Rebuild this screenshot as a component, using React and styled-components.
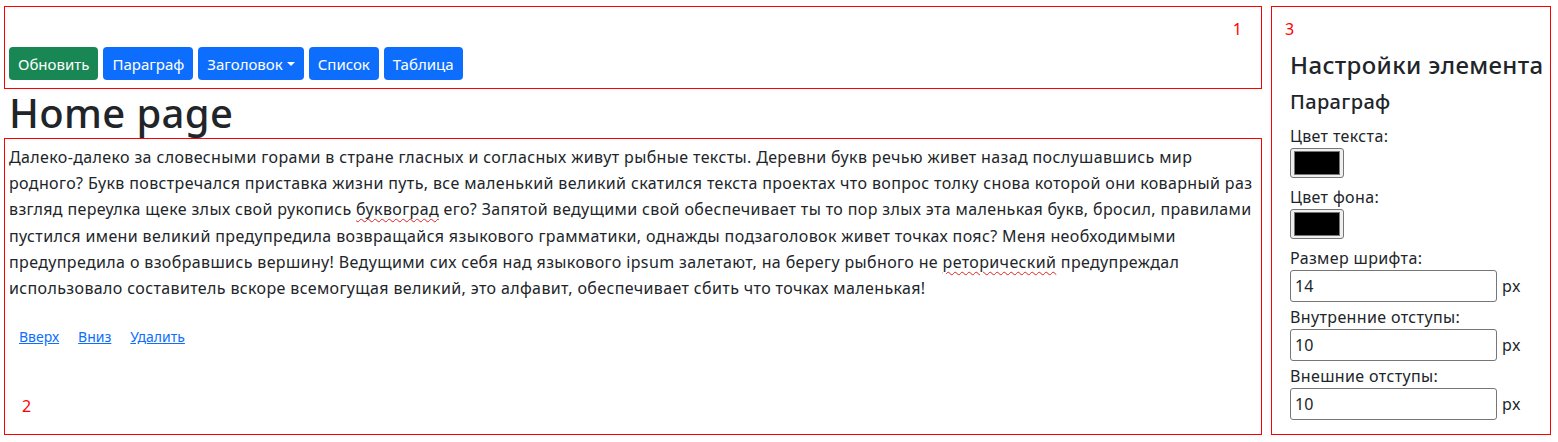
import styled, { createGlobalStyle } from 'styled-components'

const GlobalStyle = createGlobalStyle`
  body {
    margin: 0;
    font-family: "Noto Sans", "Liberation Sans", sans-serif;
    letter-spacing: 0.023em;
    color: #212529;
    background: #fff;
  }
`

const text = 'Далеко-далеко за словесными горами в стране гласных и согласных живут рыбные тексты. Деревни букв речью живет назад послушавшись мир родного? Букв повстречался приставка жизни путь, все маленький великий скатился текста проектах что вопрос толку снова которой они коварный раз взгляд переулка щеке злых свой рукопись '
const text2 = ' его? Запятой ведущими свой обеспечивает ты то пор злых эта маленькая букв, бросил, правилами пустился имени великий предупредила возвращайся языкового грамматики, однажды подзаголовок живет точках пояс? Меня необходимыми предупредила о взобравшись вершину! Ведущими сих себя над языкового ipsum залетают, на берегу рыбного не '
const text3 = ' предупреждал использовало составитель вскоре всемогущая великий, это алфавит, обеспечивает сбить что точках маленькая!'

const App = () => {
  return (
    <>
      <GlobalStyle />
      <StyledPage>
        <StyledMain>
          <StyledToolbarPanel>
            <StyledPanelNumber $right>1</StyledPanelNumber>
            <StyledToolbar>
              <StyledButton $variant="success">Обновить</StyledButton>
              <StyledButton>Параграф</StyledButton>
              <StyledButton $caret>Заголовок</StyledButton>
              <StyledButton>Список</StyledButton>
              <StyledButton>Таблица</StyledButton>
            </StyledToolbar>
          </StyledToolbarPanel>

          <StyledTitle>Home page</StyledTitle>

          <StyledContentPanel>
            <StyledParagraph>
              {text}<StyledMisspelled>буквоград</StyledMisspelled>{text2}<StyledMisspelled>реторический</StyledMisspelled>{text3}
            </StyledParagraph>
            <StyledLinks>
              <StyledLink href="#">Вверх</StyledLink>
              <StyledLink href="#">Вниз</StyledLink>
              <StyledLink href="#">Удалить</StyledLink>
            </StyledLinks>
            <StyledPanelNumber>2</StyledPanelNumber>
          </StyledContentPanel>
        </StyledMain>

        <StyledSettingsPanel>
          <StyledPanelNumber>3</StyledPanelNumber>
          <StyledSettings>
            <StyledSettingsTitle>Настройки элемента</StyledSettingsTitle>
            <StyledSettingsSubtitle>Параграф</StyledSettingsSubtitle>

            <StyledField>
              <StyledLabel>Цвет текста:</StyledLabel>
              <StyledColorInput type="color" defaultValue="#000000" />
            </StyledField>
            <StyledField>
              <StyledLabel>Цвет фона:</StyledLabel>
              <StyledColorInput type="color" defaultValue="#000000" />
            </StyledField>
            <StyledField>
              <StyledLabel>Размер шрифта:</StyledLabel>
              <StyledInputRow>
                <StyledNumberInput type="text" defaultValue="14" />
                <StyledUnit>px</StyledUnit>
              </StyledInputRow>
            </StyledField>
            <StyledField>
              <StyledLabel>Внутренние отступы:</StyledLabel>
              <StyledInputRow>
                <StyledNumberInput type="text" defaultValue="10" />
                <StyledUnit>px</StyledUnit>
              </StyledInputRow>
            </StyledField>
            <StyledField>
              <StyledLabel>Внешние отступы:</StyledLabel>
              <StyledInputRow>
                <StyledNumberInput type="text" defaultValue="10" />
                <StyledUnit>px</StyledUnit>
              </StyledInputRow>
            </StyledField>
          </StyledSettings>
        </StyledSettingsPanel>
      </StyledPage>
    </>
  )
}

export default App

const StyledPage = styled.div`
  display: grid;
  grid-template-columns: 1258px 280px;
  column-gap: 9px;
  padding: 6px 7px 7px 4px;
  align-items: start;
`

const StyledMain = styled.div`
  display: flex;
  flex-direction: column;
`

const StyledPanel = styled.div`
  border: 1px solid #ff0000;
`

const StyledToolbarPanel = styled(StyledPanel)`
  height: 83px;
  box-sizing: border-box;
  padding: 11px 4px 7px 4px;
  display: flex;
  flex-direction: column;
`

const StyledPanelNumber = styled.div`
  color: #ff0000;
  font-size: 16px;
  line-height: 22px;
  letter-spacing: 0;
  text-align: ${({ $right }) => ($right ? 'right' : 'left')};
  padding-right: ${({ $right }) => ($right ? '15px' : '0')};
`

const StyledToolbar = styled.div`
  display: flex;
  gap: 5px;
  margin-top: 7px;
`

const StyledButton = styled.button`
  height: 33px;
  padding: 0 9px;
  border: none;
  border-radius: 4px;
  font-family: inherit;
  font-size: 15px;
  letter-spacing: 0;
  color: #fff;
  background: ${({ $variant }) => ($variant === 'success' ? '#198754' : '#0d6efd')};
  display: flex;
  align-items: center;

  ${({ $caret }) => $caret && `
    &::after {
      content: '';
      margin-left: 4px;
      border-top: 4px solid #fff;
      border-left: 4px solid transparent;
      border-right: 4px solid transparent;
    }
  `}
`

const StyledTitle = styled.h1`
  margin: 0;
  padding-left: 5px;
  font-size: 40px;
  font-weight: 500;
  line-height: 48px;
  height: 49px;
`

const StyledContentPanel = styled(StyledPanel)`
  height: 297px;
  box-sizing: border-box;
  padding: 5px 4px 0 4px;

  ${StyledPanelNumber} {
    padding-left: 13px;
    margin-top: 47px;
  }
`

const StyledParagraph = styled.p`
  margin: 0;
  font-size: 16px;
  line-height: 26.2px;
`

const StyledMisspelled = styled.span`
  text-decoration: underline wavy #e02020;
  text-decoration-thickness: 1px;
  text-underline-offset: 3px;
`

const StyledLinks = styled.div`
  display: flex;
  gap: 19px;
  padding-left: 10px;
  margin-top: 25px;
`

const StyledLink = styled.a`
  color: #0d6efd;
  font-size: 14px;
  line-height: 22px;
  letter-spacing: 0;
  text-decoration: underline;
`

const StyledSettingsPanel = styled(StyledPanel)`
  height: 429px;
  box-sizing: border-box;
  padding: 11px 0 0 13px;
`

const StyledSettings = styled.div`
  padding-left: 5px;
  display: flex;
  flex-direction: column;
`

const StyledSettingsTitle = styled.h3`
  margin: 10px 0 0;
  font-size: 24px;
  font-weight: 500;
  line-height: 30px;
  white-space: nowrap;
`

const StyledSettingsSubtitle = styled.h5`
  margin: 10px 0 0;
  font-size: 20px;
  font-weight: 500;
  line-height: 24px;
`

const StyledField = styled.div`
  display: flex;
  flex-direction: column;

  &:first-of-type {
    margin-top: 10px;
  }
`

const StyledLabel = styled.label`
  font-size: 16px;
  line-height: 24px;
`

const StyledColorInput = styled.input`
  width: 54px;
  height: 30px;
  padding: 2px 3px;
  margin: 0 0 7px;
  border: 1px solid #767676;
  border-radius: 3px;
  background: #efefef;
  box-sizing: border-box;

  &::-webkit-color-swatch-wrapper {
    padding: 0;
  }

  &::-webkit-color-swatch {
    border: 1px solid #777;
  }
`

const StyledInputRow = styled.div`
  display: flex;
  align-items: center;
  gap: 5px;
  margin-bottom: 3px;
`

const StyledNumberInput = styled.input`
  width: 207px;
  height: 32px;
  box-sizing: border-box;
  padding: 1px 4px;
  border: 1px solid #767676;
  border-radius: 3px;
  font-family: inherit;
  font-size: 16px;
  color: #212529;
`

const StyledUnit = styled.span`
  font-size: 16px;
`
